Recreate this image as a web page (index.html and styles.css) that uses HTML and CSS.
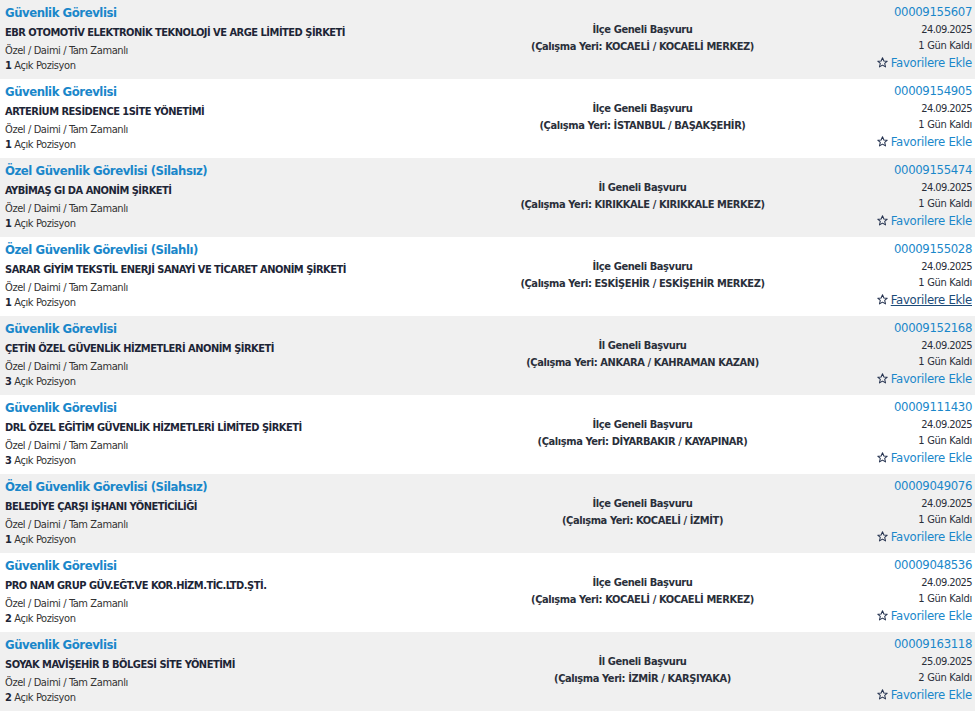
FILE: index.html
```html
<!DOCTYPE html>
<html lang="tr">
  <head>
    <meta charset="utf-8">
    <title>İş İlanları</title>
    <link rel="stylesheet" href="styles.css">
  </head>
  <body>
    <div class="ilanList">

      <div class="ilan grey">
        <div class="sol">
          <a class="baslik" href="#">Güvenlik Görevlisi</a>
          <div class="firma">EBR OTOMOTİV ELEKTRONİK TEKNOLOJİ VE ARGE LİMİTED ŞİRKETİ</div>
          <div class="tur">Özel / Daimi / Tam Zamanlı</div>
          <div class="pozisyon"><b>1</b> Açık Pozisyon</div>
        </div>
        <div class="orta">
          <div>İlçe Geneli Başvuru</div>
          <div>(Çalışma Yeri: KOCAELİ / KOCAELİ MERKEZ)</div>
        </div>
        <div class="sag">
          <a class="no" href="#">00009155607</a>
          <div class="tarih">24.09.2025</div>
          <div class="kalan">1 Gün Kaldı</div>
          <a class="fav" href="#"><svg class="star" viewBox="0 0 12 12"><path d="M6 0.8 L7.5 4.3 L11.2 4.6 L8.4 7 L9.3 10.8 L6 8.8 L2.7 10.8 L3.6 7 L0.8 4.6 L4.5 4.3 Z"/></svg>Favorilere Ekle</a>
        </div>
      </div>

      <div class="ilan">
        <div class="sol">
          <a class="baslik" href="#">Güvenlik Görevlisi</a>
          <div class="firma">ARTERİUM RESİDENCE 1SİTE YÖNETİMİ</div>
          <div class="tur">Özel / Daimi / Tam Zamanlı</div>
          <div class="pozisyon"><b>1</b> Açık Pozisyon</div>
        </div>
        <div class="orta">
          <div>İlçe Geneli Başvuru</div>
          <div>(Çalışma Yeri: İSTANBUL / BAŞAKŞEHİR)</div>
        </div>
        <div class="sag">
          <a class="no" href="#">00009154905</a>
          <div class="tarih">24.09.2025</div>
          <div class="kalan">1 Gün Kaldı</div>
          <a class="fav" href="#"><svg class="star" viewBox="0 0 12 12"><path d="M6 0.8 L7.5 4.3 L11.2 4.6 L8.4 7 L9.3 10.8 L6 8.8 L2.7 10.8 L3.6 7 L0.8 4.6 L4.5 4.3 Z"/></svg>Favorilere Ekle</a>
        </div>
      </div>

      <div class="ilan grey">
        <div class="sol">
          <a class="baslik" href="#">Özel Güvenlik Görevlisi (Silahsız)</a>
          <div class="firma">AYBİMAŞ GI DA ANONİM ŞİRKETİ</div>
          <div class="tur">Özel / Daimi / Tam Zamanlı</div>
          <div class="pozisyon"><b>1</b> Açık Pozisyon</div>
        </div>
        <div class="orta">
          <div>İl Geneli Başvuru</div>
          <div>(Çalışma Yeri: KIRIKKALE / KIRIKKALE MERKEZ)</div>
        </div>
        <div class="sag">
          <a class="no" href="#">00009155474</a>
          <div class="tarih">24.09.2025</div>
          <div class="kalan">1 Gün Kaldı</div>
          <a class="fav" href="#"><svg class="star" viewBox="0 0 12 12"><path d="M6 0.8 L7.5 4.3 L11.2 4.6 L8.4 7 L9.3 10.8 L6 8.8 L2.7 10.8 L3.6 7 L0.8 4.6 L4.5 4.3 Z"/></svg>Favorilere Ekle</a>
        </div>
      </div>

      <div class="ilan">
        <div class="sol">
          <a class="baslik" href="#">Özel Güvenlik Görevlisi (Silahlı)</a>
          <div class="firma">SARAR GİYİM TEKSTİL ENERJİ SANAYİ VE TİCARET ANONİM ŞİRKETİ</div>
          <div class="tur">Özel / Daimi / Tam Zamanlı</div>
          <div class="pozisyon"><b>1</b> Açık Pozisyon</div>
        </div>
        <div class="orta">
          <div>İlçe Geneli Başvuru</div>
          <div>(Çalışma Yeri: ESKİŞEHİR / ESKİŞEHİR MERKEZ)</div>
        </div>
        <div class="sag">
          <a class="no" href="#">00009155028</a>
          <div class="tarih">24.09.2025</div>
          <div class="kalan">1 Gün Kaldı</div>
          <a class="fav hover" href="#"><svg class="star" viewBox="0 0 12 12"><path d="M6 0.8 L7.5 4.3 L11.2 4.6 L8.4 7 L9.3 10.8 L6 8.8 L2.7 10.8 L3.6 7 L0.8 4.6 L4.5 4.3 Z"/></svg><span>Favorilere Ekle</span></a>
        </div>
      </div>

      <div class="ilan grey">
        <div class="sol">
          <a class="baslik" href="#">Güvenlik Görevlisi</a>
          <div class="firma">ÇETİN ÖZEL GÜVENLİK HİZMETLERİ ANONİM ŞİRKETİ</div>
          <div class="tur">Özel / Daimi / Tam Zamanlı</div>
          <div class="pozisyon"><b>3</b> Açık Pozisyon</div>
        </div>
        <div class="orta">
          <div>İl Geneli Başvuru</div>
          <div>(Çalışma Yeri: ANKARA / KAHRAMAN KAZAN)</div>
        </div>
        <div class="sag">
          <a class="no" href="#">00009152168</a>
          <div class="tarih">24.09.2025</div>
          <div class="kalan">1 Gün Kaldı</div>
          <a class="fav" href="#"><svg class="star" viewBox="0 0 12 12"><path d="M6 0.8 L7.5 4.3 L11.2 4.6 L8.4 7 L9.3 10.8 L6 8.8 L2.7 10.8 L3.6 7 L0.8 4.6 L4.5 4.3 Z"/></svg>Favorilere Ekle</a>
        </div>
      </div>

      <div class="ilan">
        <div class="sol">
          <a class="baslik" href="#">Güvenlik Görevlisi</a>
          <div class="firma">DRL ÖZEL EĞİTİM GÜVENLİK HİZMETLERİ LİMİTED ŞİRKETİ</div>
          <div class="tur">Özel / Daimi / Tam Zamanlı</div>
          <div class="pozisyon"><b>3</b> Açık Pozisyon</div>
        </div>
        <div class="orta">
          <div>İlçe Geneli Başvuru</div>
          <div>(Çalışma Yeri: DİYARBAKIR / KAYAPINAR)</div>
        </div>
        <div class="sag">
          <a class="no" href="#">00009111430</a>
          <div class="tarih">24.09.2025</div>
          <div class="kalan">1 Gün Kaldı</div>
          <a class="fav" href="#"><svg class="star" viewBox="0 0 12 12"><path d="M6 0.8 L7.5 4.3 L11.2 4.6 L8.4 7 L9.3 10.8 L6 8.8 L2.7 10.8 L3.6 7 L0.8 4.6 L4.5 4.3 Z"/></svg>Favorilere Ekle</a>
        </div>
      </div>

      <div class="ilan grey">
        <div class="sol">
          <a class="baslik" href="#">Özel Güvenlik Görevlisi (Silahsız)</a>
          <div class="firma">BELEDİYE ÇARŞI İŞHANI YÖNETİCİLİĞİ</div>
          <div class="tur">Özel / Daimi / Tam Zamanlı</div>
          <div class="pozisyon"><b>1</b> Açık Pozisyon</div>
        </div>
        <div class="orta">
          <div>İlçe Geneli Başvuru</div>
          <div>(Çalışma Yeri: KOCAELİ / İZMİT)</div>
        </div>
        <div class="sag">
          <a class="no" href="#">00009049076</a>
          <div class="tarih">24.09.2025</div>
          <div class="kalan">1 Gün Kaldı</div>
          <a class="fav" href="#"><svg class="star" viewBox="0 0 12 12"><path d="M6 0.8 L7.5 4.3 L11.2 4.6 L8.4 7 L9.3 10.8 L6 8.8 L2.7 10.8 L3.6 7 L0.8 4.6 L4.5 4.3 Z"/></svg>Favorilere Ekle</a>
        </div>
      </div>

      <div class="ilan">
        <div class="sol">
          <a class="baslik" href="#">Güvenlik Görevlisi</a>
          <div class="firma">PRO NAM GRUP GÜV.EĞT.VE KOR.HİZM.TİC.LTD.ŞTİ.</div>
          <div class="tur">Özel / Daimi / Tam Zamanlı</div>
          <div class="pozisyon"><b>2</b> Açık Pozisyon</div>
        </div>
        <div class="orta">
          <div>İlçe Geneli Başvuru</div>
          <div>(Çalışma Yeri: KOCAELİ / KOCAELİ MERKEZ)</div>
        </div>
        <div class="sag">
          <a class="no" href="#">00009048536</a>
          <div class="tarih">24.09.2025</div>
          <div class="kalan">1 Gün Kaldı</div>
          <a class="fav" href="#"><svg class="star" viewBox="0 0 12 12"><path d="M6 0.8 L7.5 4.3 L11.2 4.6 L8.4 7 L9.3 10.8 L6 8.8 L2.7 10.8 L3.6 7 L0.8 4.6 L4.5 4.3 Z"/></svg>Favorilere Ekle</a>
        </div>
      </div>

      <div class="ilan grey">
        <div class="sol">
          <a class="baslik" href="#">Güvenlik Görevlisi</a>
          <div class="firma">SOYAK MAVİŞEHİR B BÖLGESİ SİTE YÖNETİMİ</div>
          <div class="tur">Özel / Daimi / Tam Zamanlı</div>
          <div class="pozisyon"><b>2</b> Açık Pozisyon</div>
        </div>
        <div class="orta">
          <div>İl Geneli Başvuru</div>
          <div>(Çalışma Yeri: İZMİR / KARŞIYAKA)</div>
        </div>
        <div class="sag">
          <a class="no" href="#">00009163118</a>
          <div class="tarih">25.09.2025</div>
          <div class="kalan">2 Gün Kaldı</div>
          <a class="fav" href="#"><svg class="star" viewBox="0 0 12 12"><path d="M6 0.8 L7.5 4.3 L11.2 4.6 L8.4 7 L9.3 10.8 L6 8.8 L2.7 10.8 L3.6 7 L0.8 4.6 L4.5 4.3 Z"/></svg>Favorilere Ekle</a>
        </div>
      </div>

    </div>
  </body>
</html>
```

FILE: styles.css
```css
body {
  margin: 0;
  background-color: #FFFFFF;
  font-family: "DejaVu Sans Condensed", "DejaVu Sans", sans-serif;
  color: #333333;
}
a {
  text-decoration: none;
}

.ilanList {
  width: 975px;
}
.ilan {
  display: grid;
  grid-template-columns: 475px 325px 1fr;
  height: 79px;
  padding: 0 3px 0 5px;
  box-sizing: border-box;
  background-color: #FFFFFF;
}
.grey {
  background-color: #F0F0F0;
}

/* sol kolon */
.sol {
  padding-top: 3px;
}
.baslik {
  display: block;
  font-size: 13px;
  font-weight: bold;
  line-height: 20px;
  letter-spacing: -0.45px;
  color: #1A87CA;
}
.firma {
  font-size: 11px;
  font-weight: bold;
  line-height: 20px;
  letter-spacing: -0.5px;
  color: #1D2536;
}
.tur {
  font-size: 11px;
  line-height: 16px;
  letter-spacing: -0.4px;
}
.pozisyon {
  font-size: 11px;
  line-height: 14px;
  letter-spacing: -0.4px;
}
.pozisyon b {
  color: #1D2536;
}

/* orta kolon */
.orta {
  padding-top: 21px;
  text-align: center;
  font-size: 11px;
  font-weight: bold;
  line-height: 17px;
  letter-spacing: -0.4px;
  color: #2A2F3A;
}

/* sag kolon */
.sag {
  padding-top: 2px;
  text-align: right;
  font-size: 11px;
  color: #2A2F3A;
}
.no {
  display: block;
  font-size: 13px;
  line-height: 19px;
  letter-spacing: -0.35px;
  color: #1A87CA;
}
.tarih {
  line-height: 17px;
  letter-spacing: -0.6px;
}
.kalan {
  line-height: 15px;
  letter-spacing: -0.3px;
}
.fav {
  display: block;
  font-size: 13px;
  line-height: 20px;
  letter-spacing: -0.27px;
  color: #1A87CA;
}
.star {
  width: 11px;
  height: 11px;
  margin-right: 3px;
  vertical-align: -1px;
  fill: none;
  stroke: #24324F;
  stroke-width: 1.1;
  stroke-linejoin: round;
}
.hover span {
  color: #1B4A78;
  text-decoration: underline;
}
```
